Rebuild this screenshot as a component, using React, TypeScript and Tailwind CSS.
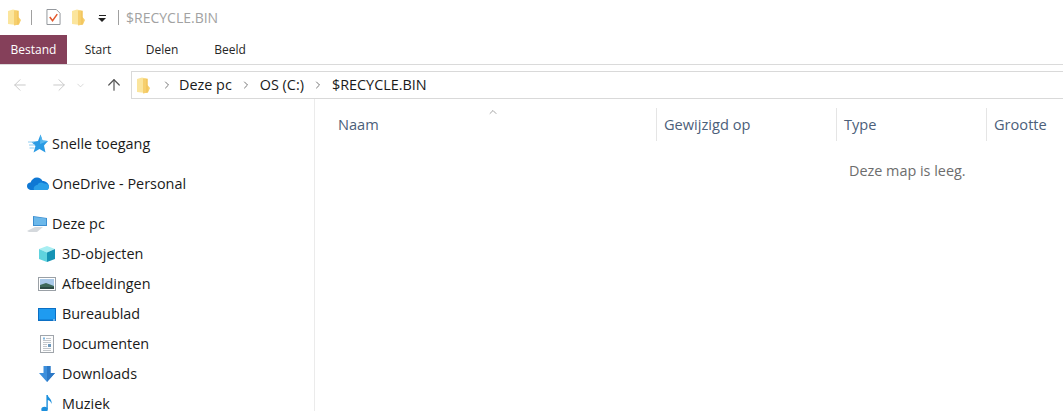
import React from 'react';
import { ArrowLeft, ArrowRight, ArrowUp, ChevronDown, ChevronRight, ChevronUp } from 'lucide-react';

const FolderIcon: React.FC<{ className?: string }> = ({ className }) => (
  <svg viewBox="0 0 13 17" className={className}>
    <path d="M0 2 L5 0.5 L9 1.5 L9 16 L4 15.5 L0 15 Z" fill="#fbe59d" />
    <path d="M6 1.5 L10.5 1.5 L10.5 8 L13 11 L11 15.5 L6 16.5 Z" fill="#f6cf6e" />
    <path d="M9.5 2 L10.5 2 L10.5 15.5 L9.5 16 Z" fill="#efbf52" />
  </svg>
);

const StarIcon = () => (
  <svg viewBox="0 0 20 20" className="w-5 h-5">
    <path d="M12.5 0.5 L14.5 6.5 L20 7 L16 11.5 L17.5 18.5 L11.5 15 L5.5 18.5 L7.5 12 L3.5 8 L10 7 Z" fill="#2a9be4" />
    <path d="M12.5 0.5 L14.5 6.5 L20 7 L12 10 Z" fill="#58b8ef" />
    <path d="M0 8 L6 8 M1 11 L7 11 M1.5 14 L6.5 14" stroke="#8fcdf2" strokeWidth="1.2" />
  </svg>
);

const CloudIcon = () => (
  <svg viewBox="0 0 22 14" className="w-[22px] h-[14px]">
    <path d="M5 13 C1.5 13 0 11 0 9 C0 7 1.5 5.5 3.5 5.5 C4.5 2.5 7 0.5 10 0.5 C12.5 0.5 14.5 2 15.5 4 C19 4 22 6.5 22 9.5 C22 11.5 20.5 13 18.5 13 Z" fill="#0f78d4" />
    <path d="M7 13 L20 13 C21.5 13 22 11 22 9.5 C22 7.5 19.5 6 17 6.5 C14 4.5 11 6 10.5 8 C8 8 6 10.5 7 13 Z" fill="#2a9fe8" />
  </svg>
);

const PcIcon = () => (
  <svg viewBox="0 0 22 18" className="w-[22px] h-[18px]">
    <path d="M6 1 L20 3 L20 11 L6 11 Z" fill="#3c8ed0" />
    <path d="M7 2 L19 3.5 L19 10 L7 10 Z" fill="#6cb8ea" />
    <path d="M0 16 L8 12 L16 12 L10 17 L2 17 Z" fill="#d5d9dd" />
  </svg>
);

const CubeIcon = () => (
  <svg viewBox="0 0 18 18" className="w-[18px] h-[18px]">
    <path d="M9 1 L17 4 L9 7.5 L1 4 Z" fill="#a8eef2" />
    <path d="M1 4 L9 7.5 L9 17 L1 14 Z" fill="#5fd3de" />
    <path d="M9 7.5 L17 4 L17 14 L9 17 Z" fill="#1593b4" />
  </svg>
);

const PictureIcon = () => (
  <svg viewBox="0 0 18 14" className="w-[18px] h-[14px]">
    <rect x="0.5" y="0.5" width="17" height="13" fill="#fff" stroke="#9aa0a6" />
    <rect x="2" y="2" width="14" height="10" fill="#a9c9e8" />
    <path d="M2 8 L8 6 L16 9 L16 12 L2 12 Z" fill="#3f6a5a" />
    <path d="M2 10 L16 10 L16 12 L2 12 Z" fill="#2d4b44" />
  </svg>
);

const DesktopIcon = () => (
  <svg viewBox="0 0 18 13" className="w-[18px] h-[13px]">
    <rect x="0" y="0" width="18" height="13" fill="#0b6fc4" />
    <rect x="1" y="1" width="16" height="10.5" fill="#1f9bf0" />
    <rect x="15" y="11.5" width="2" height="1" fill="#cfe8fb" />
  </svg>
);

const DocumentIcon = () => (
  <svg viewBox="0 0 14 18" className="w-[14px] h-[18px]">
    <rect x="0.5" y="0.5" width="13" height="17" fill="#fdfdfd" stroke="#a0a5ab" />
    <path d="M6 3.5 L11 3.5 M3 5.5 L11 5.5 M3 7.5 L11 7.5 M3 13.5 L11 13.5 M3 15.5 L11 15.5" stroke="#c2c6ca" strokeWidth="1" />
    <rect x="3" y="2.5" width="2" height="2" fill="#7db6e2" />
    <path d="M3 9.5 L7 9.5 M3 11.5 L7 11.5" stroke="#c2c6ca" strokeWidth="1" />
    <rect x="8" y="9" width="3" height="3" fill="#6d97ba" />
  </svg>
);

const DownloadIcon = () => (
  <svg viewBox="0 0 16 16" className="w-4 h-4">
    <path d="M4.5 0 L11.5 0 L11.5 7 L16 7 L8 16 L0 7 L4.5 7 Z" fill="#3d8fdc" />
    <path d="M8 0 L11.5 0 L11.5 7 L16 7 L8 16 Z" fill="#2c78c6" />
  </svg>
);

const MusicIcon = () => (
  <svg viewBox="0 0 12 18" className="w-3 h-[18px]">
    <ellipse cx="3.5" cy="14.5" rx="3.2" ry="2.8" fill="#1c8fdc" />
    <path d="M5.4 14.5 L5.4 0 L6.8 0 C7 3 11.5 4 10.5 9 C10 6.5 8.5 5.5 6.8 5 L6.8 14.5 Z" fill="#1c8fdc" />
  </svg>
);

const SideRow: React.FC<{ icon: React.ReactNode; label: string; child?: boolean; extra?: string }> = ({ icon, label, child, extra }) => (
  <div className={`h-[30px] flex items-center text-[14.4px] text-[#1a1a1a] ${child ? 'pl-[37px]' : 'pl-[27px]'} ${extra ?? ''}`}>
    <span className={`flex items-center justify-center shrink-0 ${child ? 'w-[20px] mr-[5px]' : 'w-[22px] mr-[3px]'}`}>{icon}</span>
    {label}
  </div>
);

const Column: React.FC<{ label: string; className: string }> = ({ label, className }) => (
  <div className={`h-[33px] flex items-center border-r border-[#e5e5e5] pl-[7px] ${className}`}>{label}</div>
);

const App: React.FC = () => {
  return (
    <div className="w-[1063px] h-[411px] overflow-hidden bg-white font-['Open_Sans','Noto_Sans',sans-serif] text-[14px] flex flex-col">
      <div className="h-[34px] flex items-center pl-[8px] shrink-0">
        <FolderIcon className="w-[13px] h-[17px]" />
        <div className="w-px h-[15px] bg-[#a0a0a0] ml-[10px]" />
        <svg viewBox="0 0 16 18" className="w-[15px] h-[18px] ml-[14px]">
          <path d="M1 1 L11 1 L15 5 L15 17 L1 17 Z" fill="#fff" stroke="#8e9297" />
          <path d="M4 9 L7 13 L12 6" stroke="#e2582c" strokeWidth="1.6" fill="none" />
        </svg>
        <FolderIcon className="w-[13px] h-[17px] ml-[11px]" />
        <div className="ml-[13px] flex flex-col items-center gap-[2px] mt-[2px]">
          <div className="w-[7px] h-px bg-[#222]" />
          <div className="w-0 h-0 border-l-[4px] border-r-[4px] border-t-[4px] border-l-transparent border-r-transparent border-t-[#222]" />
        </div>
        <div className="w-px h-[15px] bg-[#a0a0a0] ml-[12px]" />
        <span className="ml-[7px] text-[#a2a2a2]">$RECYCLE.BIN</span>
      </div>

      <div className="h-[31px] flex items-end border-b border-[#dadada] text-[12px] text-[#262626] shrink-0">
        <div className="w-[67px] h-[29px] bg-[#85405a] text-white flex items-center justify-center">Bestand</div>
        <div className="w-[62px] h-[29px] flex items-center justify-center">Start</div>
        <div className="w-[66px] h-[29px] flex items-center justify-center">Delen</div>
        <div className="w-[70px] h-[29px] flex items-center justify-center">Beeld</div>
      </div>

      <div className="h-[34px] flex items-center pt-[6px] shrink-0">
        <div className="w-[131px] flex items-center shrink-0 pl-[11px]">
          <ArrowLeft size={18} strokeWidth={1.3} className="text-[#c8c8c8]" />
          <ArrowRight size={18} strokeWidth={1.3} className="text-[#c8c8c8] ml-[21px]" />
          <ChevronDown size={11} strokeWidth={1.5} className="text-[#c8c8c8] ml-[7px]" />
          <ArrowUp size={18} strokeWidth={1.6} className="text-[#555] ml-[19px]" />
        </div>
        <div className="flex-1 h-[28px] border border-r-0 border-[#d9d9d9] flex items-center pl-[5px] text-[14.4px] text-[#1a1a1a]">
          <FolderIcon className="w-[13px] h-[17px]" />
          <ChevronRight size={12} strokeWidth={1.8} className="text-[#666] ml-[11px]" />
          <span className="ml-[6px]">Deze pc</span>
          <ChevronRight size={12} strokeWidth={1.8} className="text-[#666] ml-[8px]" />
          <span className="ml-[8px]">OS (C:)</span>
          <ChevronRight size={12} strokeWidth={1.8} className="text-[#666] ml-[8px]" />
          <span className="ml-[8px]">$RECYCLE.BIN</span>
        </div>
      </div>

      <div className="flex-1 flex min-h-0">
        <div className="w-[315px] shrink-0 border-r border-[#ebebeb] pt-[30px] overflow-hidden">
          <SideRow icon={<StarIcon />} label="Snelle toegang" extra="mb-[10px]" />
          <SideRow icon={<CloudIcon />} label="OneDrive - Personal" extra="mb-[10px]" />
          <SideRow icon={<PcIcon />} label="Deze pc" />
          <SideRow child icon={<CubeIcon />} label="3D-objecten" />
          <SideRow child icon={<PictureIcon />} label="Afbeeldingen" />
          <SideRow child icon={<DesktopIcon />} label="Bureaublad" />
          <SideRow child icon={<DocumentIcon />} label="Documenten" />
          <SideRow child icon={<DownloadIcon />} label="Downloads" />
          <SideRow child icon={<MusicIcon />} label="Muziek" />
        </div>
        <div className="flex-1 min-w-0 pt-[9px]">
          <div className="relative flex text-[14.6px] text-[#4c607a]">
            <ChevronUp size={12} strokeWidth={1.2} className="absolute left-[172px] -top-[2px] text-[#666]" />
            <Column label="Naam" className="w-[342px] pl-[23px]" />
            <Column label="Gewijzigd op" className="w-[180px]" />
            <Column label="Type" className="w-[150px]" />
            <div className="h-[33px] flex items-center pl-[7px]">Grootte</div>
          </div>
          <div className="pl-[534px] pt-[19px] text-[14.4px] text-[#6d6d6d]">Deze map is leeg.</div>
        </div>
      </div>
    </div>
  );
};

export default App;
